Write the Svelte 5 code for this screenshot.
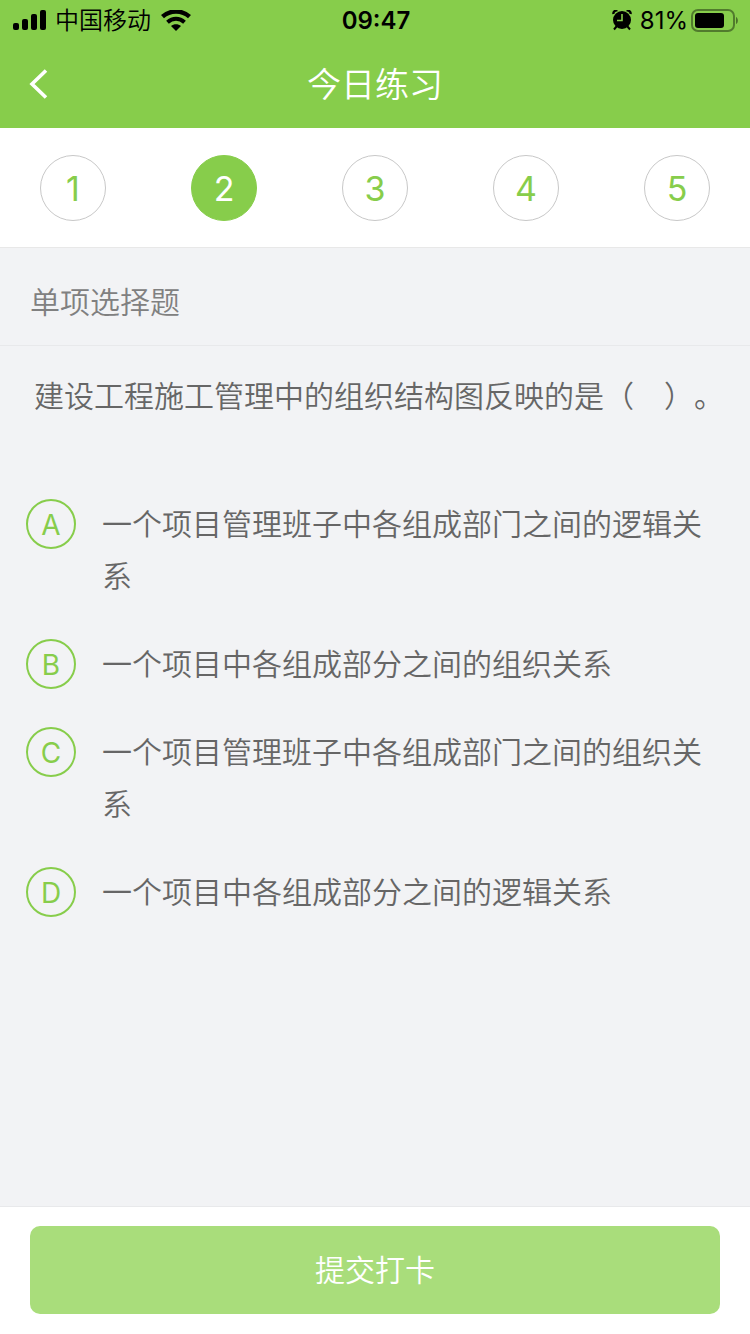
<script>
    let questions = [1, 2, 3, 4, 5];

    let current = 2;

    let selected = '';

    let options = [
        { key: 'A', text: '一个项目管理班子中各组成部门之间的逻辑关系' },
        { key: 'B', text: '一个项目中各组成部分之间的组织关系' },
        { key: 'C', text: '一个项目管理班子中各组成部门之间的组织关系' },
        { key: 'D', text: '一个项目中各组成部分之间的逻辑关系' }
    ];
</script>

<div class="page">
    <div class="status">
        <div class="status-left">
            <svg width="34" height="22" viewBox="0 0 34 22">
                <rect x="0" y="13" width="6" height="7" rx="2" />
                <rect x="9" y="9" width="6" height="11" rx="2" />
                <rect x="18" y="4" width="6" height="16" rx="2" />
                <rect x="27" y="0" width="6" height="20" rx="2" />
            </svg>
            <span>中国移动</span>
            <svg class="wifi" width="30" height="22" viewBox="0 0 30 22">
                <path d="M1.500 6.600C9-.2 21-.2 28.500 6.600" fill="none" stroke="#000" stroke-width="4.400" />
                <path d="M6.500 12.200c5-4.500 12-4.500 17 0" fill="none" stroke="#000" stroke-width="4" />
                <path d="M15 21l-5-5c2.800-2.400 7.200-2.400 10 0z" />
            </svg>
        </div>
        <span class="time">09:47</span>
        <div class="status-right">
            <svg width="20" height="22" viewBox="0 0 20 22">
                <circle cx="10" cy="10" r="9" />
                <path d="M1.500 4C1 2 3 0 5.500 .5M18.500 4c.5-2-1.500-4-4-3.500" fill="none" stroke="#000" stroke-width="2.400" />
                <path d="M4.500 16.500L2 19.500M15.500 16.500l2.500 3" stroke="#000" stroke-width="2" />
                <path d="M10 4v6.500H5" fill="none" stroke="#87cd4b" stroke-width="1.600" />
            </svg>
            <span>81%</span>
            <svg width="48" height="24" viewBox="0 0 48 24">
                <rect x="1" y="1" width="42" height="21" rx="6" fill="none" stroke="#000" stroke-opacity=".4" stroke-width="2" />
                <rect x="4" y="4" width="29" height="15" rx="3" />
                <path d="M45 8c2.500 1 2.500 6 0 7z" fill-opacity=".45" />
            </svg>
        </div>
    </div>

    <header>
        <button class="back" aria-label="返回">
            <svg width="20" height="32" viewBox="0 0 20 32">
                <path d="M17 2.500L3 16l14 13.500" fill="none" stroke="#fff" stroke-width="3.600" />
            </svg>
        </button>
        <h1>今日练习</h1>
    </header>

    <nav>
        {#each questions as n}
            <button class="num" class:active={n == current} on:click={() => (current = n)}>{n}</button>
        {/each}
    </nav>

    <h2>单项选择题</h2>

    <main>
        <p class="question">建设工程施工管理中的组织结构图反映的是（&#12288;）。</p>

        <div class="options">
            {#each options as option}
                <label class="option">
                    <input type="radio" name="answer" value={option.key} bind:group={selected} />
                    <span class="letter">{option.key}</span>
                    <span class="text">{option.text}</span>
                </label>
            {/each}
        </div>
    </main>

    <footer>
        <button class="submit">提交打卡</button>
    </footer>
</div>

<style>
    :global(body) {
        margin: 0;
    }
    .page {
        display: flex;
        flex-direction: column;
        min-height: 100vh;
        background: #f2f3f5;
        color: #666;
        font-family: Inter, "Noto Sans CJK SC", sans-serif;
        font-size: 30px;
        font-weight: 350;
    }
    button {
        padding: 0;
        border: none;
        font: inherit;
        cursor: pointer;
    }
    .status {
        display: grid;
        grid-template-columns: 1fr auto 1fr;
        align-items: center;
        height: 40px;
        padding: 0 11px 0 13px;
        background: #87cd4b;
        color: #000;
        font-size: 24px;
        line-height: 42px;
    }
    .status-left,
    .status-right {
        display: flex;
        align-items: center;
        gap: 8px;
    }
    .wifi {
        margin-left: 2px;
    }
    .status-right {
        justify-content: flex-end;
        gap: 3px;
        font-weight: 400;
    }
    .status-right span {
        margin-left: 5px;
    }
    .time {
        font-weight: 600;
    }
    header {
        display: grid;
        grid-template-columns: 88px 1fr 88px;
        align-items: center;
        height: 88px;
        background: #87cd4b;
        color: #fff;
    }
    .back {
        display: flex;
        align-items: center;
        height: 88px;
        padding-left: 29px;
        background: none;
    }
    h1 {
        margin: 0;
        padding-top: 2px;
        font-size: 34px;
        font-weight: 350;
        line-height: 86px;
        text-align: center;
    }
    nav {
        display: flex;
        justify-content: space-between;
        padding: 27px 40px 26px;
        background: #fff;
        border-bottom: 1px solid #e8e8e8;
    }
    .num {
        box-sizing: border-box;
        width: 66px;
        height: 66px;
        border: 1px solid #c8c8c8;
        border-radius: 50%;
        background: #fff;
        color: #87cd4b;
        font-size: 34px;
        font-weight: 400;
    }
    .num.active {
        border-color: #87cd4b;
        background: #87cd4b;
        color: #fff;
    }
    h2 {
        margin: 0;
        padding: 32px 30px 21px;
        border-bottom: 1px solid #e8e9eb;
        color: #808080;
        font-size: 30px;
        font-weight: 350;
        line-height: 44px;
    }
    main {
        flex: 1;
        padding: 24px 26px;
        line-height: 52px;
    }
    .question {
        margin: 0;
        padding-left: 8px;
        text-spacing-trim: space-all;
    }
    .options {
        display: flex;
        flex-direction: column;
        gap: 36px;
        margin-top: 76px;
    }
    .option {
        display: flex;
        align-items: flex-start;
        gap: 26px;
        cursor: pointer;
    }
    .option input {
        position: absolute;
        margin: 0;
        opacity: 0;
    }
    .letter {
        flex: none;
        box-sizing: border-box;
        width: 50px;
        height: 50px;
        margin-top: 1px;
        border: 2px solid #87cd4b;
        border-radius: 50%;
        color: #87cd4b;
        font-size: 28px;
        font-weight: 400;
        line-height: 48px;
        text-align: center;
    }
    .option input:checked + .letter {
        background: #87cd4b;
        color: #fff;
    }
    footer {
        padding: 19px 30px 20px;
        border-top: 1px solid #e8e9eb;
        background: #fff;
    }
    .submit {
        width: 100%;
        height: 88px;
        padding-bottom: 4px;
        border-radius: 10px;
        background: #a9dd7b;
        color: #fff;
    }
</style>
